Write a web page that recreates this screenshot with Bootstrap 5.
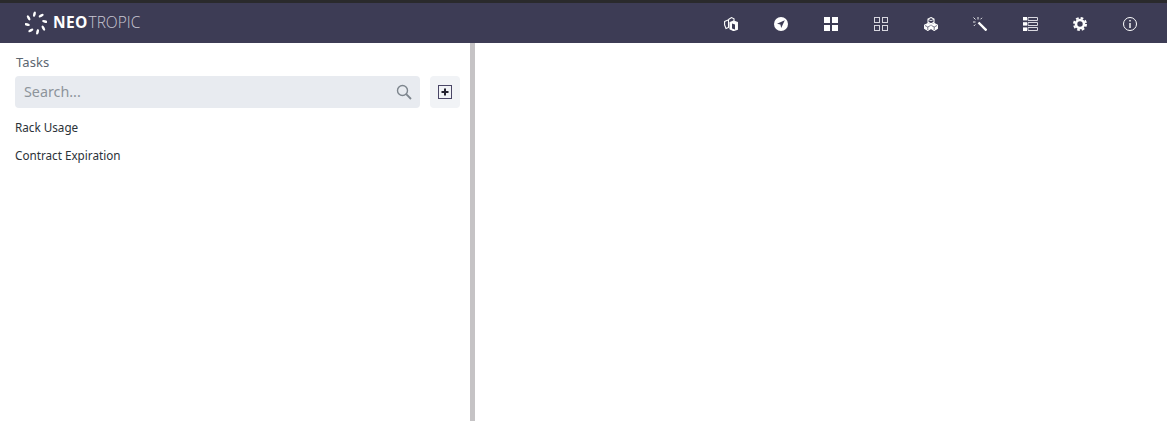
<!DOCTYPE html>
<html lang="en">
<head>
  <meta charset="UTF-8">
  <title>Neotropic</title>
  <link href="https://cdn.jsdelivr.net/npm/bootstrap@5.3.2/dist/css/bootstrap.min.css" rel="stylesheet">
  <style>
    html, body { height: 421px; overflow: hidden; }
    body { font-family: "Noto Sans", sans-serif; background: #fff; }
    .app-bar { height: 43px; background: #3d3c55; border-top: 3px solid #2a2a2c; }
    .brand-logo { margin-left: 25px; gap: 6px; color: #fff; font-family: "Open Sans", sans-serif; font-size: 15.5px; line-height: 1; }
    .brand-logo b { font-weight: 700; letter-spacing: .3px; }
    .brand-logo span { font-weight: 300; color: #c9c7d3; margin-left: -5px; }
    .bar-icons { margin-right: 12px; padding-top: 2px; }
    .bar-icon { width: 49.875px; display: flex; justify-content: center; }
    .main-area { height: 378px; }
    .side-pane { width: 470px; padding: 10px 10px 0 15px; }
    .pane-split { width: 5px; background: #c5c3c5; }
    .pane-title { font-size: 13px; line-height: 18px; color: #5c6670; margin-left: 1px; letter-spacing: .1px; }
    .search-box { height: 32px; width: 405px; background: #e8ebf0; border-radius: 4px; padding: 0 8px 0 9px; margin-top: 5px; }
    .search-box input { border: 0; background: transparent; outline: 0; font-size: 14.3px; flex: 1; padding: 0; color: #333; }
    .search-box input::placeholder { color: #8d949b; opacity: 1; }
    .add-btn { width: 30px; height: 32px; margin-top: 5px; margin-left: 10px; background: #f1f3f6; border-radius: 4px; border: 0; padding: 0; }
    .task-list { margin-top: 5px; }
    .task-list div { font-size: 11.7px; line-height: 28px; color: #2b3238; }
  </style>
</head>
<body>

  <div class="app-bar d-flex align-items-center justify-content-between">
    <div class="brand-logo d-flex align-items-center">
      <svg width="22" height="24" viewBox="0 0 22 24" fill="#fff">
        <ellipse cx="11" cy="3" rx="1.3" ry="2.8" transform="rotate(-10 11 12) rotate(25 11 3)"/>
        <ellipse cx="11" cy="3" rx="1.3" ry="2.8" transform="rotate(35 11 12) rotate(25 11 3)"/>
        <ellipse cx="11" cy="3" rx="1.3" ry="2.8" transform="rotate(80 11 12) rotate(25 11 3)"/>
        <ellipse cx="11" cy="3" rx="1.3" ry="2.8" transform="rotate(125 11 12) rotate(25 11 3)"/>
        <ellipse cx="11" cy="3" rx="1.3" ry="2.8" transform="rotate(170 11 12) rotate(25 11 3)"/>
        <ellipse cx="11" cy="3" rx="1.3" ry="2.8" transform="rotate(215 11 12) rotate(25 11 3)"/>
        <ellipse cx="11" cy="3" rx="1.3" ry="2.8" transform="rotate(260 11 12) rotate(25 11 3)"/>
        <ellipse cx="11" cy="3" rx="1.3" ry="2.8" transform="rotate(305 11 12) rotate(25 11 3)"/>
      </svg>
      <b>NEO</b><span>TROPIC</span>
    </div>
    <div class="bar-icons d-flex align-items-center">
      <div class="bar-icon">
        <svg width="14" height="14" viewBox="0 0 14 14" fill="none" stroke="#fff" stroke-width="1.100"><path d="M.6 4.500 4.500 2.800v7.700L2 11.500.6 8z"/><path d="M4.500 2.500 7.500.6 10 1.800v2.500"/><path d="M6 5.500 9.500 4l3.900 1.500v6.800L9.500 13.600 6 12z" fill="#fff"/><path d="M8 6.500v5l3 1v-5z" fill="#3d3c55" stroke="none"/></svg>
      </div>
      <div class="bar-icon">
        <svg width="14" height="14" viewBox="0 0 14 14"><circle cx="7" cy="7" r="7" fill="#fff"/><path d="M10.800 3.200 3 6.800l3.400.8.800 3.400z" fill="#3d3c55"/></svg>
      </div>
      <div class="bar-icon">
        <svg width="14" height="14" viewBox="0 0 14 14" fill="#fff"><rect width="6" height="6"/><rect x="8" width="6" height="6"/><rect y="8" width="6" height="6"/><rect x="8" y="8" width="6" height="6"/></svg>
      </div>
      <div class="bar-icon">
        <svg width="14" height="14" viewBox="0 0 14 14" fill="none" stroke="#d8d7df"><rect x=".5" y=".5" width="5" height="5"/><rect x="8.500" y=".5" width="5" height="5"/><rect x=".5" y="8.500" width="5" height="5"/><rect x="8.500" y="8.500" width="5" height="5"/></svg>
      </div>
      <div class="bar-icon">
        <svg width="14" height="14" viewBox="0 0 14 14" fill="none" stroke="#fff" stroke-width="1.100"><path d="M7 .6l3 1.400v3.300L7 6.800 4 5.300V2z"/><path d="M3.800 6.600 7 8.200v3.300l-3.200 1.900L.6 11.500V8.200z" fill="#fff"/><path d="M10.200 6.600 13.400 8.200v3.300l-3.200 1.900L7 11.500V8.200z" fill="#fff"/><path d="M4 2.300 7 3.700 10 2.300" stroke-width=".8"/><path d="M3.800 10v3M10.200 10v3M1 8.500l2.800 1.500L6.600 8.500M7.400 8.500l2.800 1.500L13 8.500" stroke="#3d3c55" stroke-width=".7"/></svg>
      </div>
      <div class="bar-icon">
        <svg width="14" height="14" viewBox="0 0 14 14" fill="none" stroke="#fff"><path d="M5.500 5.500 13.500 13.500" stroke-width="2.400"/><path d="M.5.500l2 2M5 0v2.500M0 5h2.500M9 .8 7.500 2.300M.8 9l1.500-1.500" stroke-width=".9"/></svg>
      </div>
      <div class="bar-icon">
        <svg width="15" height="14" viewBox="0 0 15 14" fill="#fff"><rect width="4" height="3.400"/><rect y="5.200" width="4" height="3.400"/><rect y="10.400" width="4" height="3.600"/><path d="M5 .5h9.500v3H5zm0 5h9.500v3H5zm0 5h9.500v3H5z" fill="none" stroke="#d8d7df"/></svg>
      </div>
      <div class="bar-icon">
        <svg width="14" height="14" viewBox="0 0 14 14" fill="none" stroke="#fff"><circle cx="7" cy="7" r="4" stroke-width="2.600"/><circle cx="7" cy="7" r="6" stroke-width="2" stroke-dasharray="2.700 2"/></svg>
      </div>
      <div class="bar-icon">
        <svg width="14" height="14" viewBox="0 0 14 14" fill="none" stroke="#fff"><circle cx="7" cy="7" r="6.500"/><path d="M7 6v5" stroke-width="1.400"/><path d="M7 3v1.500" stroke-width="1.400"/></svg>
      </div>
    </div>
  </div>

  <div class="d-flex main-area">
    <div class="side-pane">
      <div class="pane-title">Tasks</div>
      <div class="d-flex">
        <div class="search-box d-flex align-items-center">
          <input type="text" placeholder="Search...">
          <svg width="16" height="16" viewBox="0 0 16 16" fill="none" stroke="#7d858d" stroke-width="1.400"><circle cx="6.500" cy="6.500" r="5"/><path d="M10.200 10.200 15 15" stroke-width="1.800"/></svg>
        </div>
        <button class="add-btn d-flex align-items-center justify-content-center" type="button" aria-label="Add">
          <svg width="14" height="14" viewBox="0 0 14 14"><rect x=".5" y=".5" width="13" height="13" fill="#f1f3f6" stroke="#4a4666"/><path d="M7 3.500v7M3.500 7h7" stroke="#23212f" stroke-width="2"/></svg>
        </button>
      </div>
      <div class="task-list">
        <div>Rack Usage</div>
        <div>Contract Expiration</div>
      </div>
    </div>
    <div class="pane-split"></div>
  </div>

</body>
</html>
